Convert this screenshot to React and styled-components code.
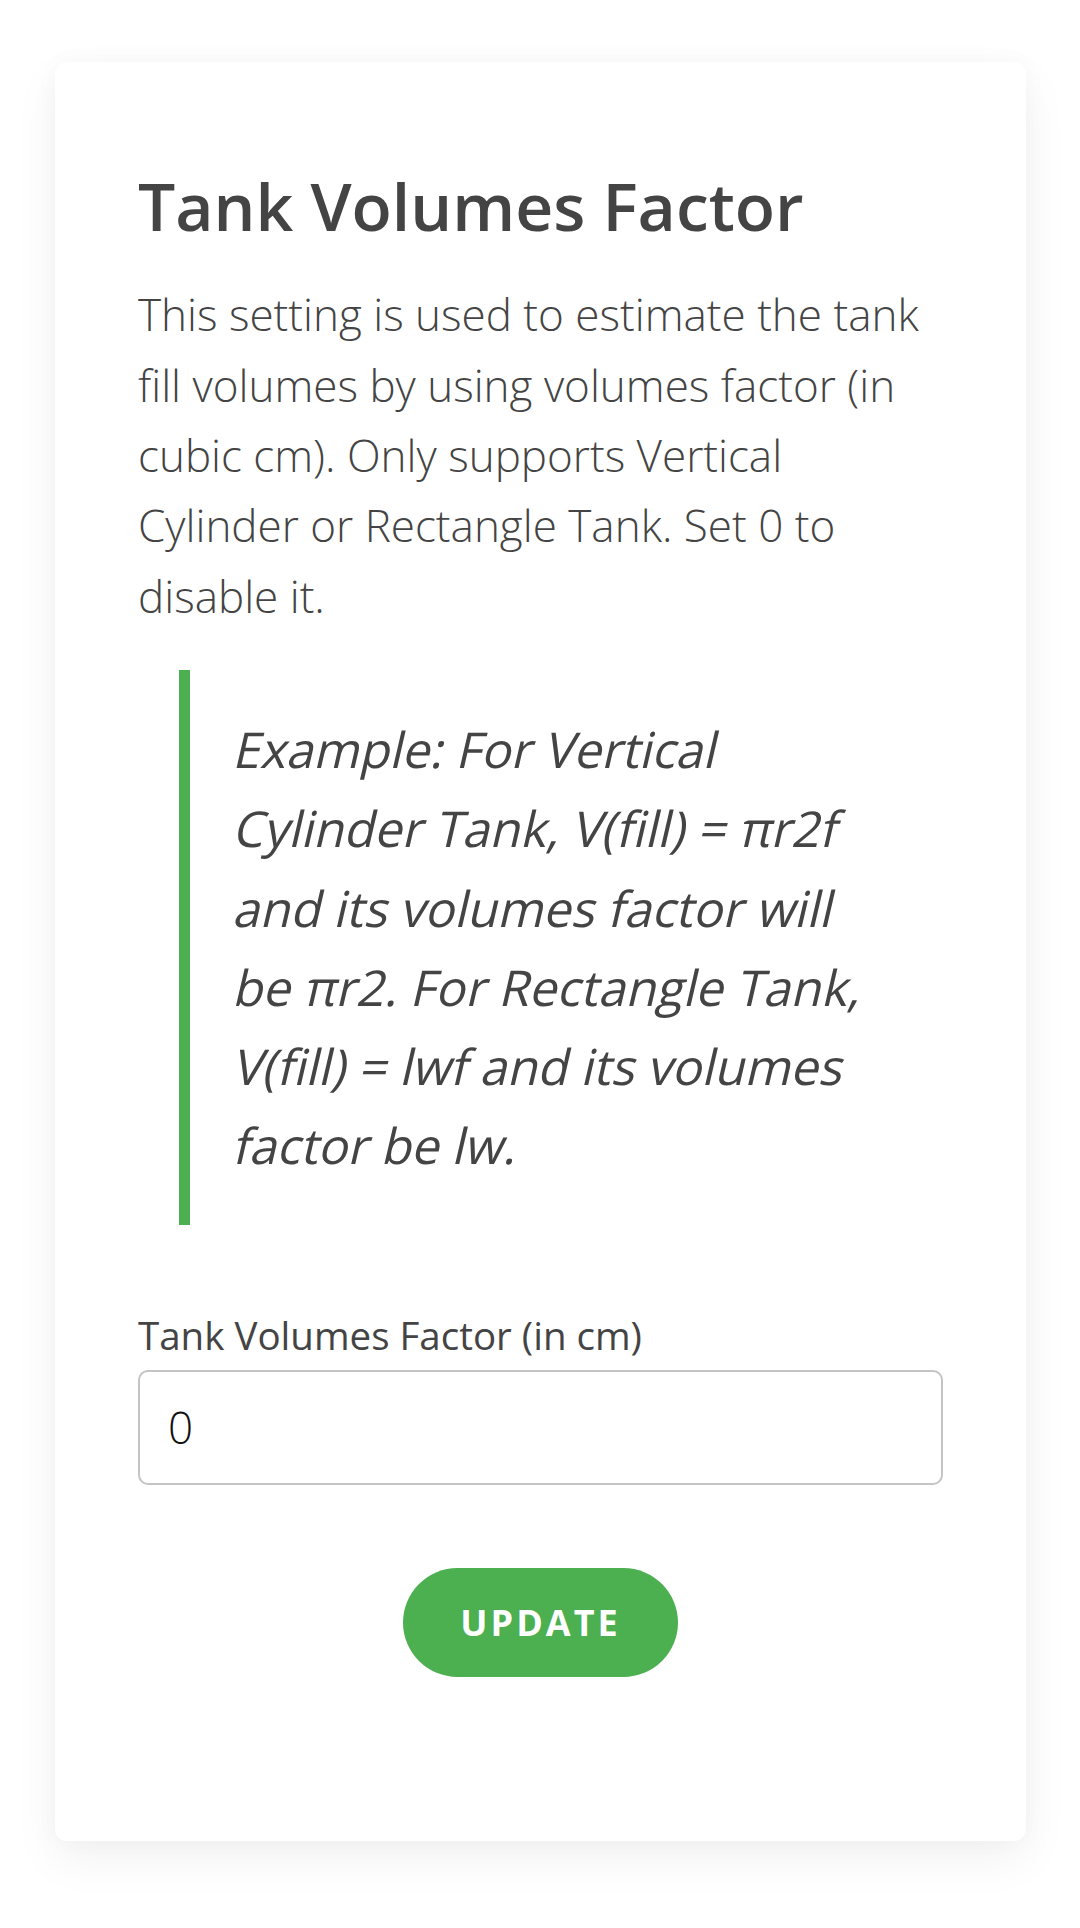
import React from "react";
import styled, { createGlobalStyle } from "styled-components";

const Global = createGlobalStyle`
  html, body { margin: 0; padding: 0; background: #ffffff; }
  body { font-family: "Open Sans", "Noto Sans", sans-serif; color: #444444; }
  * { box-sizing: border-box; }
`;

const Page = styled.div`
  padding: 62px 54px 86px 55px;
`;

const Card = styled.section`
  background: #ffffff;
  border-radius: 12px;
  box-shadow: 0 18px 48px rgba(0, 0, 0, 0.055), 0 0 24px rgba(0, 0, 0, 0.03);
  padding: 104px 83px 164px;
`;

const Title = styled.h1`
  margin: 0;
  font-family: "Open Sans", sans-serif;
  font-weight: 600;
  font-size: 66px;
  line-height: 1.2;
  color: #444444;
`;

const Intro = styled.p`
  margin: 34px 0 0;
  font-weight: 300;
  font-size: 44px;
  line-height: 1.6;
  color: #444444;
`;

const Quote = styled.blockquote`
  margin: 39px 40px 0 41px;
  border-left: 11px solid #4caf50;
  padding: 40px 0 40px 42px;
  font-weight: 400;
  font-size: 49.5px;
  line-height: 1.6;
  color: #444444;
`;

/* the reference shows an obliqued (slanted upright) face, one slanted line each */
const QuoteLine = styled.span`
  display: block;
  white-space: nowrap;
  transform: skewX(-13deg);
  transform-origin: 0 72%;
`;

const Field = styled.div`
  margin-top: 80px;
`;

const Label = styled.label`
  display: block;
  font-weight: 400;
  font-size: 38.5px;
  line-height: 1.6;
  color: #444444;
  margin-bottom: 3px;
`;

const Input = styled.input`
  display: block;
  width: 100%;
  height: 115px;
  border: 2px solid #c4c4c4;
  border-radius: 10px;
  padding: 0 28px;
  font-family: "Open Sans", sans-serif;
  font-weight: 300;
  font-size: 44px;
  color: #111111;
  background: #ffffff;
  outline: none;
`;

const Actions = styled.div`
  display: flex;
  justify-content: center;
  margin-top: 83px;
`;

const Button = styled.button`
  height: 109px;
  width: 275px;
  border: none;
  border-radius: 55px;
  background: #4caf50;
  color: #ffffff;
  font-family: "Open Sans", sans-serif;
  font-weight: 700;
  font-size: 36px;
  letter-spacing: 3px;
  text-transform: uppercase;
  cursor: pointer;
  padding: 0;
`;

const quoteLines = [
  "Example: For Vertical",
  "Cylinder Tank, V(fill) = πr2f",
  "and its volumes factor will",
  "be πr2. For Rectangle Tank,",
  "V(fill) = lwf and its volumes",
  "factor be lw.",
];

export default function App() {
  return (
    <>
      <Global />
      <Page>
        <Card>
          <Title>Tank Volumes Factor</Title>
          <Intro>
            This setting is used to estimate the tank fill volumes by using
            volumes factor (in cubic cm). Only supports Vertical Cylinder or
            Rectangle Tank. Set 0 to disable it.
          </Intro>
          <Quote>
            {quoteLines.map((line) => (
              <QuoteLine key={line}>{line}</QuoteLine>
            ))}
          </Quote>
          <Field>
            <Label htmlFor="tvf">Tank Volumes Factor (in cm)</Label>
            <Input id="tvf" type="text" defaultValue="0" />
          </Field>
          <Actions>
            <Button type="button">Update</Button>
          </Actions>
        </Card>
      </Page>
    </>
  );
}
